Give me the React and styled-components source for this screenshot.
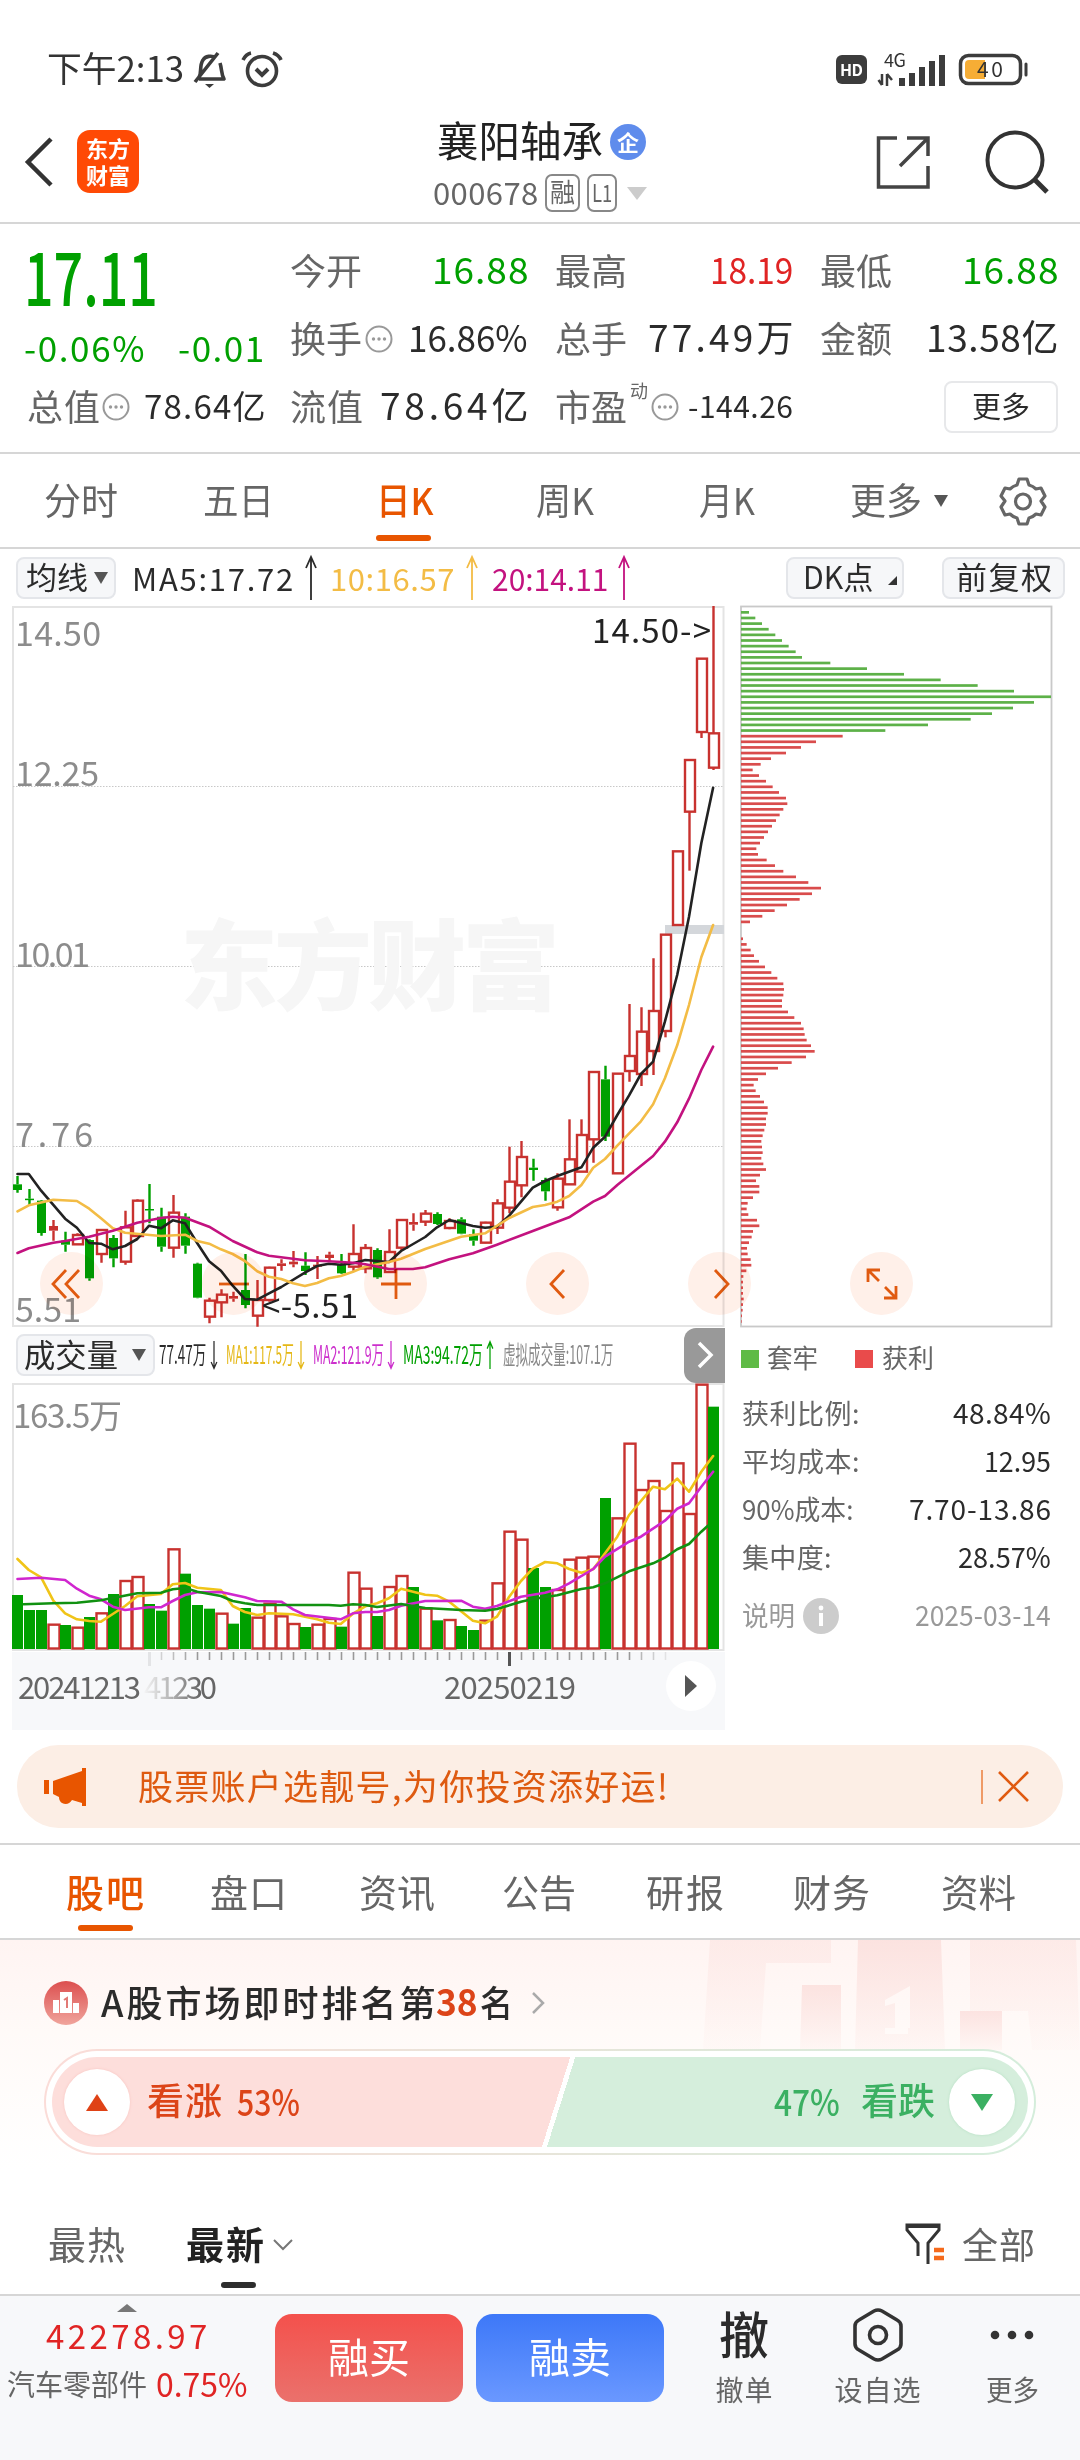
import React, { useLayoutEffect, useRef } from "react";
import styled, { createGlobalStyle } from "styled-components";

const FONT = '"Noto Sans CJK SC", "Noto Sans", sans-serif';
const C = {
  ink: "#2b2b2b", gray: "#666", mute: "#8c8c8c", line: "#d6d6d6", orange: "#e85500",
  green: "#00a000", red: "#e02424", candle: "#c8322f", amber: "#f3bc45", magenta: "#c3127f",
};

const Global = createGlobalStyle`
  * { box-sizing: border-box; }
  body { margin: 0; background: #fff; font-family: ${FONT}; -webkit-font-smoothing: antialiased; }
  svg { display: block; flex: none; overflow: visible; }
`;

/* ---------- fitted text ---------- */
const TextBox = styled.span`
  display: block;
  flex: none;
  width: ${p => p.$w}px;
  margin-left: ${p => p.$ml || 0}px;
  margin-top: ${p => p.$up || 0}px;
  font-size: ${p => p.$s}px;
  font-weight: ${p => p.$b || 400};
  color: ${p => p.$c || C.gray};
  line-height: 1;
  white-space: nowrap;
`;
const TextInner = styled.span`
  display: inline-block;
  transform-origin: 0 50%;
  margin-top: -0.06em;
  margin-bottom: 0.06em;
  vertical-align: top;
`;

function T({ w, s, c, b, ml, up, children }) {
  const ref = useRef(null);
  useLayoutEffect(() => {
    const el = ref.current;
    el.style.letterSpacing = "0px";
    el.style.transform = "none";
    const natural = el.offsetWidth;
    const count = el.textContent.length;
    if (natural > w) el.style.transform = `scaleX(${w / natural})`;
    else if (count > 1) el.style.letterSpacing = `${(w - natural) / (count - 1)}px`;
  }, [w, s, children]);
  return <TextBox $w={w} $s={s} $c={c} $b={b} $ml={ml} $up={up}><TextInner ref={ref}>{children}</TextInner></TextBox>;
}

/* ---------- layout parts ---------- */
const Screen = styled.div`
  width: 1080px; height: 2460px; display: flex; flex-direction: column; background: #fff; overflow: hidden;
`;
const Row = styled.div`
  display: flex; align-items: center; flex: none;
  height: ${p => p.$h}px;
  padding-left: ${p => p.$pl || 0}px;
  padding-top: ${p => p.$pt || 0}px;
`;
const Gap = styled.div`flex: none; width: ${p => p.$w}px;`;
const Header = styled.header`
  display: flex; height: 124px; flex: none; padding: 18px 0 0 24px; border-bottom: 2px solid ${C.line};
`;
const HeaderSide = styled.div`display: flex; align-items: center; height: 87px; width: ${p => p.$w}px;`;
const HeaderMid = styled.div`display: flex; flex-direction: column; width: 443px;`;
const Logo = styled.div`
  width: 62px; height: 63px; margin-left: 23px; background: #ff4a05; border-radius: 13px; color: #fff;
  display: grid; place-content: center; gap: 5px;
`;
const Badge = styled.div`
  width: 36px; height: 36px; margin-left: 7px; border-radius: 50%; background: #5f8cec; display: grid; place-content: center;
`;
const Tag = styled.div`
  width: ${p => p.$w}px; height: 38px; margin-left: 7px; border: 2px solid #888; border-radius: 7px; display: grid; place-content: center;
`;
const Quote = styled.section`
  height: 230px; flex: none; padding: 13px 0 0 24px; border-bottom: 2px solid ${C.line}; display: flex;
`;
const QuoteLeft = styled.div`width: 266px; display: flex; flex-direction: column;`;
const QuoteGrid = styled.div`display: grid; grid-template-columns: 265px 265px 238px; grid-template-rows: repeat(3, 68px);`;
const Cell = styled.div`
  display: flex; align-items: center; justify-content: space-between; width: 238px;
`;
const Pair = styled.div`display: flex; align-items: center; gap: 3px;`;
const MoreButton = styled.div`
  width: 114px; height: 52px; margin-left: auto; border: 2px solid #e7e8ea; border-radius: 8px; display: grid; place-content: center;
`;
const Tabs = styled.nav`
  height: ${p => p.$h}px; flex: none; display: flex; border-bottom: 2px solid ${C.line}; padding-left: ${p => p.$pl}px;
`;
const InfoTabs = styled(Tabs)`border-top: 2px solid ${C.line}; margin-top: 15px;`;
const Tab = styled.div`
  display: flex; flex-direction: column; align-items: center; flex: none;
  width: ${p => p.$w}px; margin-left: ${p => p.$ml || 0}px; padding-top: ${p => p.$pt}px;
`;
const Underline = styled.i`
  width: 55px; height: 6px; border-radius: 3px; background: ${C.orange}; margin-top: ${p => p.$mt}px; margin-left: ${p => p.$ml || 0}px; flex: none;
`;
const Chip = styled.div`
  display: flex; align-items: center; flex: none; width: ${p => p.$w}px; height: 42px; margin-left: ${p => p.$ml || 0}px;
  padding-left: ${p => p.$pl}px; background: #f6f7f9; border: 2px solid #e4e6ea; border-radius: 8px;
`;
const ChartArea = styled.section`display: flex; height: 1123px; flex: none; padding-left: 12px; position: relative;`;
const ChartCol = styled.div`width: 713px; display: flex; flex-direction: column;`;
const SideCol = styled.div`width: 330px; margin-left: 15px; display: flex; flex-direction: column;`;
const Controls = styled.div`position: absolute; left: 40px; top: 646px; display: flex; gap: 99px; mix-blend-mode: multiply;`;
const RoundButton = styled.div`
  width: 63px; height: 63px; border-radius: 50%; background: #fff0e9; display: grid; place-content: center;
`;
const NextTab = styled.div`
  width: 41px; height: 55px; margin-left: auto; background: #999; border-radius: 12px 0 0 12px; display: grid; place-content: center;
`;
const DateStrip = styled.div`height: 78px; margin-top: 1px; background: #f7f8fa; position: relative;`;
const PlayButton = styled.div`
  position: absolute; right: 9px; top: 9px; width: 50px; height: 50px; border-radius: 50%; background: #fff; display: grid; place-content: center;
`;
const Swatch = styled.i`width: 18px; height: 18px; background: ${p => p.$c}; margin-left: ${p => p.$ml || 0}px;`;
const StatRow = styled.div`
  display: flex; justify-content: space-between; align-items: center; height: ${p => p.$h || 48}px; width: 311px; padding-left: 2px;
`;
const Banner = styled.section`
  display: flex; align-items: center; height: 83px; flex: none; margin: 16px 17px 0; padding-left: 27px; border-radius: 42px; background: #fceee5;
`;
const BannerRule = styled.i`width: 2px; height: 34px; background: #ef9a66; margin-left: 313px;`;
const Rank = styled.section`
  height: 230px; flex: none; position: relative; padding-left: 44px;
  background: linear-gradient(#fff4f2, #fffaf8 40%, #fff);
`;
const Decor = styled.div`position: absolute; left: 700px; top: 0;`;
const Pill = styled.div`
  width: 992px; height: 106px; margin-top: 22px; position: relative; padding: 2px; border-radius: 53px;
  background: linear-gradient(90deg, #fbdcd8, #d4eddb);
`;
const PillWhite = styled.div`height: 102px; border-radius: 51px; background: #fff; padding: 6px;`;
const PillBody = styled.div`
  height: 90px; border-radius: 45px; overflow: hidden; display: flex; align-items: center; padding: 0 12px;
  background: linear-gradient(107.5deg, #fddedb 0 51.6%, #fff 51.6% 52.1%, #d5eedc 52.1%);
`;
const Knob = styled.div`
  width: 66px; height: 66px; border-radius: 50%; background: #fff; box-shadow: 0 0 3px ${p => p.$c}; display: grid; place-content: center; margin-left: ${p => p.$ml || 0}px;
`;
const ListHead = styled.section`height: 126px; flex: none; border-bottom: 2px solid ${C.line}; padding: 52px 0 0 48px;`;
const DarkLine = styled.i`display: block; width: 35px; height: 6px; border-radius: 3px; background: #2d2d2d; margin: 14px 0 0 173px;`;
const Dock = styled.footer`flex: 1; display: flex; background: #f7f8fa;`;
const DockIndex = styled.div`width: 275px; padding: 7px 0 0 7px; display: flex; flex-direction: column;`;
const Trade = styled.div`
  width: 188px; height: 88px; margin: 18px 13px 0 0; border-radius: 17px; display: grid; place-content: center;
  background: linear-gradient(${p => p.$from}, ${p => p.$to});
`;
const DockItem = styled.div`
  width: ${p => p.$w}px; margin-left: ${p => p.$ml}px; padding-top: 11px; display: flex; flex-direction: column; align-items: center;
`;
const DockIcon = styled.div`height: 56px; display: grid; place-content: center; margin-bottom: 14px;`;

/* ---------- small drawings ---------- */
const Dots = () => (
  <svg width="28" height="28" viewBox="0 0 28 28"><circle cx="14" cy="14" r="12.5" fill="none" stroke="#999" strokeWidth="2" />
    {[8.5, 14, 19.5].map(x => <circle key={x} cx={x} cy="14" r="1.7" fill="#999" />)}</svg>
);
const Tri = ({ w, h, c, up }) => (
  <svg width={w} height={h} viewBox="0 0 10 10" preserveAspectRatio="none"><path d={up ? "M5 0L10 10H0Z" : "M0 0H10L5 10Z"} fill={c} /></svg>
);
const Arrow = ({ c, down, small }) => (
  <svg width={small ? 8 : 14} height={small ? 28 : 44} viewBox="0 0 14 44" fill="none" stroke={c} strokeWidth={small ? 2.2 : 1.8} preserveAspectRatio="none">
    <path d={down ? "M7 0V42M2 33L7 43L12 33" : "M7 44V2M2 12L7 1L12 12"} />
  </svg>
);
const StatusIcons = () => (
  <svg width="92" height="40" viewBox="0 0 92 40" fill="none" stroke="#3c3c3c" strokeWidth="3.6">
    <path d="M9 28C12 24 9 17 13 11C15 7 22 6 26 9M30 14C32 20 31 25 34 30H9M5 33L28 4" strokeLinejoin="round" />
    <path d="M15 35H24L19.500 39Z" fill="#3c3c3c" stroke="none" />
    <circle cx="72" cy="22" r="14.500" /><path d="M66 20L72 26L78 20" strokeWidth="4" /><path d="M53 11Q56 5 61 4M83 4Q89 6 91 11" />
  </svg>
);
const Signal = () => (
  <svg width="68" height="38" viewBox="880 48 68 38">
    <text x="886" y="65" fontSize="18" fill="#333" textLength="22" fontFamily={FONT}>4G</text>
    <path d="M884 72V83M884 83L880.500 78M889 84V72M889 72L894 78" stroke="#3c3c3c" strokeWidth="2.500" fill="none" />
    {[[901, 76], [911, 71], [921, 65], [931, 59], [941, 53]].map(([x, y]) => <path key={x} d={`M${x} ${y}h6V84h-6z`} fill="#3c3c3c" />)}
  </svg>
);
const Battery = () => (
  <svg width="70" height="34" viewBox="960 51 70 34">
    <rect x="962.500" y="54.500" width="60" height="28" rx="8" fill="#fff" stroke="#3c3c3c" strokeWidth="3.500" />
    <path d="M971 59H987V78H971Q967 78 967 74V63Q967 59 971 59Z" fill="#f6ad35" />
    <path d="M1028 63V74" stroke="#3c3c3c" strokeWidth="3" strokeLinecap="round" />
    <text x="979" y="76" fontSize="21" fill="#333" textLength="26" fontFamily={FONT}>40</text>
  </svg>
);
const Gear = () => (
  <svg width="48" height="50" viewBox="0 0 48 50" fill="none" stroke="#666" strokeWidth="3.200" strokeLinejoin="round">
    <path d="M20 3H28L30 9Q34 10 37 13L42 12L46 20L42 25L46 31L42 39L37 38Q34 41 30 42L28 48H20L18 42Q14 41 11 38L6 39L2 31L6 25L2 20L6 12L11 13Q14 10 18 9Z" />
    <circle cx="24" cy="25.500" r="7.500" />
  </svg>
);
const ControlIcon = ({ d }) => (
  <svg width="44" height="34" viewBox="-22 -17 44 34" fill="none" stroke="#e05a10" strokeWidth="2.800"><path d={d} /></svg>
);

/* ---------- chart data ---------- */
const X0 = 17.5, STEP = 12;
// [rising, high, bodyTop, bodyBottom, low, solid] in third-pixels below y = 950
const CANDLES = [
  [0,678,703,720,728],[0,717,746,750,765],[0,750,752,849,857],[1,810,828,842,872,1],[0,845,872,884,905],[1,850,855,883,885],
  [0,868,870,985,992],[1,838,840,912,938],[0,855,864,925,952],[1,782,832,935,944],[1,748,752,858,858],[0,702,777,781,820],
  [0,773,800,890,905],[1,735,788,893,923],[0,790,800,887,911],[0,938,941,1043,1045],[1,1043,1052,1100,1120],[1,1018,1034,1057,1102],
  [1,1025,1038,1046,1055,1],[0,912,1020,1065,1075],[1,990,1050,1097,1130],[1,950,953,1050,1055],[1,928,940,948,962,1],[1,903,935,943,952,1],
  [0,907,947,963,975],[1,918,944,950,987,1],[1,905,914,924,935,1],[0,912,942,970,972],[1,823,912,950,962],[1,882,894,955,970],
  [0,895,900,982,986],[1,838,906,966,968],[1,808,810,893,900],[1,790,816,824,842,1],[1,780,791,815,828],[0,787,792,822,825],
  [1,805,813,834,838],[0,802,808,851,853],[0,838,852,872,887],[1,815,818,878,880],[1,748,760,833,852],[1,590,695,773,790],
  [1,573,621,706,742],[0,626,653,660,692],[0,683,690,724,752],[1,670,686,772,782],[1,508,628,703,703],[1,508,555,665,665],
  [1,363,366,568,638],[0,347,388,560,573],[1,370,371,670,670],[1,162,318,363,395],[1,172,245,372,408],[1,25,183,303,375],
  [1,-46,-46,243,262],[1,-296,-296,-75,-75],[1,-570,-570,-415,-238],[1,-874,-874,-654,-636],[1,-1032,-650,-547,-540],
];
const MA5 = "37,672 61,672 87,722 138,806 163,833 189,879 214,881 239,898 265,888 291,867 316,827 341,835 366,811 392,820 418,880 443,934 468,962 493,1007 519,1047 545,1049 570,1030 596,1011 646,968 672,948 697,941 722,944 748,940 774,930 824,936 850,903 901,861 926,832 952,810 1002,828 1028,833 1053,830 1079,797 1129,713 1155,693 1181,678 1232,652 1257,593 1282,560 1308,495 1333,436 1358,372 1384,335 1409,215 1435,75 1460,-100 1486,-320 1511,-487";
const MA10 = "37,784 61,766 113,749 163,753 189,776 214,805 239,835 265,848 341,858 392,854 418,873 443,881 468,898 493,912 519,933 545,964 570,980 596,987 621,1000 646,1008 672,999 697,985 722,978 748,965 774,950 824,936 850,926 901,897 977,860 1028,850 1079,804 1129,771 1155,765 1181,755 1206,738 1232,705 1257,653 1282,627 1308,587 1358,514 1384,463 1409,385 1435,286 1460,165 1486,22 1511,-75";
const MA20 = "37,909 61,895 113,878 138,873 189,860 239,842 291,818 341,804 366,800 392,803 443,830 493,873 545,907 570,917 646,931 697,934 748,938 774,943 824,957 875,957 901,952 952,928 1002,910 1053,884 1129,843 1206,802 1257,755 1282,738 1308,705 1384,618 1409,575 1435,517 1460,446 1486,360 1511,290";
const V5 = "37,717 61,750 87,772 113,842 138,880 163,898 189,903 214,905 239,882 265,858 291,829 341,822 366,793 392,789 418,803 468,810 493,858 519,876 545,885 570,880 621,883 672,898 697,908 722,912 748,881 774,859 799,850 824,835 850,806 901,824 926,827 952,845 977,874 1002,902 1028,910 1053,890 1079,830 1104,783 1129,746 1155,726 1181,730 1206,747 1232,758 1257,748 1308,650 1333,585 1384,500 1409,508 1435,476 1460,515 1486,455 1511,408";
const V10 = "37,777 87,773 138,780 163,806 189,827 214,838 239,860 265,870 316,862 341,862 366,843 392,825 418,817 468,816 519,832 545,843 596,845 621,868 646,885 722,898 748,880 774,876 799,876 824,870 850,857 901,843 977,842 1002,860 1028,866 1053,858 1104,830 1155,818 1181,808 1206,790 1257,747 1282,710 1333,665 1358,650 1409,602 1435,566 1460,550 1486,500 1511,455";
const V20 = "50,853 113,850 163,848 214,841 239,834 291,820 341,818 366,808 392,804 418,815 468,828 493,843 519,850 545,855 697,855 722,857 748,853 774,855 799,861 850,852 875,858 901,864 977,870 1028,872 1053,867 1104,845 1129,837 1181,826 1232,807 1257,802 1282,790 1333,754 1384,730 1409,713 1435,688 1460,672 1486,635 1500,617";
const VOL = [825,870,870,914,915,923,891,880,822,783,771,852,872,688,761,855,866,881,911,864,893,851,889,912,921,914,897,920,758,806,888,801,768,801,866,901,900,918,930,902,790,635,659,744,801,810,719,713,710,534,595,371,510,483,573,430,582,194,260];
const VOL_DOWN = [0,1,2,4,6,8,11,12,14,15,16,18,19,24,27,30,33,35,37,38,43,44,49,58];
const CHIPS = [87,106,126,146,166,186,206,227,246,331,441,552,662,773,882,993,942,879,816,752,624,496,368,288,243,198,153,122,98,117,138,158,177,198,202,190,179,168,156,144,132,120,109,114,140,165,190,228,265,303,276,239,201,164,127,90,0,0,69,80,92,102,117,135,154,172,190,192,190,186,186,204,223,243,251,254,260,273,284,258,215,174,138,114,101,107,120,132,143,143,138,138,133,128,124,126,128,124,130,138,120,108,118,118,99,83,80,85,111,118,99,95,87,81,83,92,94,79,70,69,69,69,71,69,68,66,65];

const toPoints = (str, base) => str.split(" ").map(p => {
  const [x, y] = p.split(",").map(Number);
  return `${(x / 2.119).toFixed(1)},${(base + y / 3).toFixed(1)}`;
}).join(" ");
const Line = ({ data, base, c, w = 3 }) => (
  <polyline points={toPoints(data, base)} fill="none" stroke={c} strokeWidth={w} strokeLinejoin="round" strokeLinecap="round" />
);
const AxisText = ({ x, y, w, s = 34, c = C.mute, b = 400, children }) => (
  <text x={x} y={y} textLength={w} fontSize={s} fill={c} fontWeight={b} fontFamily={FONT}>{children}</text>
);

function PriceChart() {
  return (
    <svg width="713" height="721" viewBox="12 606 713 721">
      <rect x="13" y="607" width="710.500" height="719" fill="none" stroke="#e4e4e4" strokeWidth="2" />
      {[786.5, 966.5, 1146.5].map(y => <path key={y} d={`M13 ${y}H723`} stroke="#c8c8c8" strokeDasharray="1.5 1.5" />)}
      <AxisText x={180} y={1002} w={380} s={98} c="#f6f6f6" b={900}>东方财富</AxisText>
      <rect x="665" y="925" width="59" height="9" fill="#d4d7db" />
      <AxisText x={15} y={646} w={86}>14.50</AxisText>
      <AxisText x={15} y={786} w={84}>12.25</AxisText>
      <AxisText x={15} y={967} w={75}>10.01</AxisText>
      <AxisText x={15} y={1147} w={78}>7.76</AxisText>
      <AxisText x={15} y={1322} w={66}>5.51</AxisText>
      {CANDLES.map(([up, hi, t, b, lo, solid], i) => {
        const x = X0 + i * STEP, y = v => 950 + v / 3;
        const c = up ? C.candle : C.green, filled = !up || solid;
        return (
          <g key={i} stroke={c} strokeWidth="2.4">
            <path d={`M${x} ${y(hi)}V${y(t)}M${x} ${y(b)}V${y(lo)}`} />
            {filled
              ? <rect x={x - 4.5} y={y(t)} width="9" height={Math.max(1.5, y(b) - y(t))} fill={c} stroke="none" />
              : <rect x={x - 4.5} y={y(t)} width="10" height={y(b) - y(t)} fill="#fff" />}
          </g>
        );
      })}
      <Line data={MA5} base={950} c="#222" w={2.6} />
      <Line data={MA10} base={950} c={C.amber} w={2.6} />
      <Line data={MA20} base={950} c={C.magenta} w={2.6} />
      <AxisText x={592} y={643} w={119} s={33} c="#222">14.50-&gt;</AxisText>
      <AxisText x={262} y={1318} w={96} s={33} c="#222">&lt;-5.51</AxisText>
    </svg>
  );
}

function VolumeChart() {
  return (
    <svg width="713" height="268" viewBox="12 1383 713 268">
      <rect x="13" y="1384" width="710.500" height="266" fill="none" stroke="#e4e4e4" strokeWidth="2" />
      <AxisText x={13} y={1428} w={109} s={33}>163.5万</AxisText>
      {VOL.map((v, i) => {
        const x = X0 + i * STEP, y = 1320 + v / 3, down = VOL_DOWN.includes(i);
        return down
          ? <rect key={i} x={x - 5.5} y={y} width="11" height={1649 - y} fill={C.green} />
          : <rect key={i} x={x - 5} y={y} width="11" height={1648.5 - y} fill="#fff" stroke={C.candle} strokeWidth="2.4" />;
      })}
      <Line data={V5} base={1320} c="#f0c418" w={2.6} />
      <Line data={V10} base={1320} c="#d026cf" w={2.6} />
      <Line data={V20} base={1320} c="#119111" w={2.6} />
    </svg>
  );
}

function DateAxis() {
  const ticks = Array.from({ length: 44 }, (_, i) => i + 11);
  return (
    <svg width="713" height="78" viewBox="12 1652 713 78">
      <defs><linearGradient id="fade" x1="145" x2="200" gradientUnits="userSpaceOnUse"><stop offset="0" stopColor="#f2f2f3" /><stop offset=".3" stopColor="#ccc" /><stop offset="1" stopColor="#666" /></linearGradient></defs>
      {ticks.map(i => {
        const big = i === 41 || i === 11;
        const o = i < 15 ? (i - 10) * 0.2 : i > 51 ? (55 - i) * 0.22 : 1;
        return <path key={i} d={`M${X0 + i * STEP} 1652V${big ? 1666 : 1660}`} stroke={i === 41 ? "#555" : "#999"} opacity={o} strokeWidth={big ? 3 : 1.6} />;
      })}
      <AxisText x={18} y={1699} w={123} s={31} c="#666">20241213</AxisText>
      <AxisText x={144} y={1699} w={73} s={31} c="url(#fade)">41230</AxisText>
      <AxisText x={444} y={1699} w={132} s={31} c="#666">20250219</AxisText>
    </svg>
  );
}

function CostChart() {
  return (
    <svg width="314" height="721" viewBox="740 606 314 721">
      <rect x="741" y="606.5" width="310.500" height="720" fill="none" stroke="#c9c9c9" strokeWidth="1.800" />
      {CHIPS.map((end, i) => end > 0 && (
        <rect key={i} x="741" y={611 + i * 5.628} width={(end - 63) / 3} height="2.700" fill={i < 22 ? "#5db148" : "#d94c4c"} />
      ))}
    </svg>
  );
}

const CONTROLS = ["M-6 -14L-19 0L-6 14M7 -14L-6 0L7 14", "M-15 0H15", "M-15 0H15M0 -15V15", "M6 -14L-7 0L6 14", "M-5 -14L8 0L-5 14", "M-14 -2V-14H-2M-14 -14L-3 -3M2 14H14V2M3 3L14 14"];
const STATS = [["获利比例:", 118, "48.84%", 98], ["平均成本:", 118, "12.95", 67], ["90%成本:", 111, "7.70-13.86", 142], ["集中度:", 90, "28.57%", 93]];
const INFO_TABS = [["股吧", 66, 78], ["盘口", 210, 77], ["资讯", 359, 76], ["公告", 502, 74], ["研报", 646, 78], ["财务", 793, 77], ["资料", 941, 75]];

export default function App() {
  return (
    <Screen>
      <Global />
      <Row $h={100} $pl={47} $pt={38}>
        <T w={137} s={35} c="#333">下午2:13</T>
        <Gap $w={6} /><StatusIcons />
        <Gap $w={554} />
        <svg width="31" height="29" viewBox="0 0 31 29"><rect width="31" height="29" rx="6" fill="#3c3c3c" /><text x="4" y="20.500" fontSize="16" fontWeight="700" fill="#fff" textLength="23" fontFamily={FONT}>HD</text></svg>
        <Gap $w={11} /><Signal /><Gap $w={12} /><Battery />
      </Row>

      <Header>
        <HeaderSide $w={409}>
          <svg width="30" height="50" viewBox="0 0 30 50" fill="none" stroke="#333" strokeWidth="4.500"><path d="M27 2L4 25L27 48" /></svg>
          <Logo><T w={44} s={22} c="#fff" b={700}>东方</T><T w={44} s={22} c="#fff" b={700}>财富</T></Logo>
        </HeaderSide>
        <HeaderMid>
          <Row $h={48} $pl={4}><T w={166} s={42} c="#222" b={400}>襄阳轴承</T><Badge><T w={22} s={22} c="#fff" b={700}>企</T></Badge></Row>
          <Row $h={54}><T w={105} s={31} c="#666">000678</T>
            <Tag $w={35}><T w={25} s={26}>融</T></Tag><Tag $w={30}><T w={20} s={24}>L1</T></Tag><Gap $w={10} /><Tri w={20} h={13} c="#ccc" />
          </Row>
        </HeaderMid>
        <HeaderSide $w={200}>
          <svg width="56" height="56" viewBox="0 0 56 56" fill="none" stroke="#444" strokeWidth="3.500"><path d="M21 4H2.500V53H52V32M31 4H52V22M52 4L24 32" /></svg>
          <Gap $w={53} />
          <svg width="66" height="66" viewBox="0 0 66 66" fill="none" stroke="#333" strokeWidth="4"><circle cx="30" cy="31" r="27.500" /><path d="M49 50L62 63" strokeWidth="5" /></svg>
        </HeaderSide>
      </Header>

      <Quote>
        <QuoteLeft>
          <Row $h={82}><T w={134} s={74} c={C.green} b={500}>17.11</T></Row>
          <Row $h={60}><T w={120} s={35} c={C.green} b={400}>-0.06%</T><T w={86} ml={34} s={35} c={C.green} b={400}>-0.01</T></Row>
          <Row $h={56} $pl={3}><T w={73} s={36}>总值</T><Gap $w={2} /><Dots /><T w={121} ml={14} s={33} c={C.ink}>78.64亿</T></Row>
        </QuoteLeft>
        <QuoteGrid>
          <Cell><T w={72} s={36}>今开</T><T w={96} s={37} c={C.green}>16.88</T></Cell>
          <Cell><T w={72} s={36}>最高</T><T w={83} s={37} c={C.red}>18.19</T></Cell>
          <Cell><T w={72} s={36}>最低</T><T w={96} s={37} c={C.green}>16.88</T></Cell>
          <Cell><Pair><T w={72} s={36}>换手</T><Dots /></Pair><T w={120} s={37} c={C.ink}>16.86%</T></Cell>
          <Cell><T w={72} s={36}>总手</T><T w={145} s={37} c={C.ink}>77.49万</T></Cell>
          <Cell><T w={72} s={36}>金额</T><T w={132} s={37} c={C.ink}>13.58亿</T></Cell>
          <Cell><T w={73} s={36}>流值</T><T w={148} s={37} c={C.ink}>78.64亿</T></Cell>
          <Cell><Pair><T w={72} s={36}>市盈</T><T w={18} s={18} up={-32}>动</T><Dots /></Pair><T w={105} s={30} c={C.ink}>-144.26</T></Cell>
          <Cell><MoreButton><T w={58} s={29} c={C.ink}>更多</T></MoreButton></Cell>
        </QuoteGrid>
      </Quote>

      <Tabs $h={95} $pl={44}>
        <Tab $w={74} $pt={29}><T w={74} s={37}>分时</T></Tab>
        <Tab $w={71} $ml={85} $pt={29}><T w={71} s={37}>五日</T></Tab>
        <Tab $w={58} $ml={102} $pt={29}><T w={58} s={37} c={C.orange} b={500}>日K</T><Underline $mt={15} $ml={-4} /></Tab>
        <Tab $w={58} $ml={102} $pt={29}><T w={58} s={37}>周K</T></Tab>
        <Tab $w={56} $ml={105} $pt={29}><T w={56} s={37}>月K</T></Tab>
        <Tab $w={72} $ml={95} $pt={29}><T w={72} s={37}>更多</T></Tab>
        <Tab $w={14} $ml={12} $pt={41}><Tri w={14} h={12} c="#555" /></Tab>
        <Tab $w={48} $ml={51} $pt={22}><Gear /></Tab>
      </Tabs>

      <Row $h={57} $pl={16}>
        <Chip $w={100} $pl={8}><T w={62} s={31} c={C.ink}>均线</T><Gap $w={6} /><Tri w={14} h={12} c="#555" /></Chip>
        <T w={161} ml={16} s={31} c={C.ink} up={3}>MA5:17.72</T><Gap $w={11} /><Arrow c={C.ink} />
        <T w={124} ml={12} s={31} c={C.amber} up={3}>10:16.57</T><Gap $w={11} /><Arrow c={C.amber} />
        <T w={116} ml={13} s={31} c={C.magenta} up={3}>20:14.11</T><Gap $w={9} /><Arrow c={C.magenta} />
        <Chip $w={118} $ml={155} $pl={15}><T w={70} s={31} c={C.ink}>DK点</T><Gap $w={13} /><svg width="12" height="12"><path d="M11 4V13H2Z" fill="#333" /></svg></Chip>
        <Chip $w={123} $ml={38} $pl={12}><T w={96} s={31} c={C.ink}>前复权</T></Chip>
      </Row>

      <ChartArea>
        <ChartCol>
          <PriceChart />
          <Row $h={56} $pl={4}>
            <Chip $w={139} $pl={6}><T w={94} s={32} c={C.ink}>成交量</T><Gap $w={14} /><Tri w={14} h={12} c="#555" /></Chip>
            <T w={47} ml={4} s={25} c={C.ink}>77.47万</T><Gap $w={4} /><Arrow c={C.ink} down small />
            <T w={68} ml={8} s={25} c="#e5b817">MA1:117.5万</T><Gap $w={3} /><Arrow c="#e5b817" down small />
            <T w={71} ml={8} s={25} c="#cc2fcc">MA2:121.9万</T><Gap $w={3} /><Arrow c="#cc2fcc" down small />
            <T w={80} ml={8} s={25} c={C.green}>MA3:94.72万</T><Gap $w={3} /><Arrow c={C.green} small />
            <T w={110} ml={9} s={25} c="#888">虚拟成交量:107.1万</T>
            <NextTab><svg width="18" height="28" viewBox="0 0 18 28" fill="none" stroke="#fff" strokeWidth="3.500"><path d="M3 2L15 14L3 26" /></svg></NextTab>
          </Row>
          <VolumeChart />
          <DateStrip><DateAxis /><PlayButton><svg width="14" height="22" viewBox="0 0 14 22"><path d="M1 0L13 11L1 22Z" fill="#555" /></svg></PlayButton></DateStrip>
        </ChartCol>
        <SideCol>
          <CostChart />
          <Row $h={63} $pl={1}><Swatch $c="#5fbb46" /><T w={51} ml={8} s={26}>套牢</T><Swatch $c="#e94b4b" $ml={37} /><T w={52} ml={9} s={26}>获利</T></Row>
          {STATS.map(([k, kw, v, vw]) => <StatRow key={k}><T w={kw} s={27}>{k}</T><T w={vw} s={28} c={C.ink}>{v}</T></StatRow>)}
          <StatRow $h={68}><Pair><T w={53} s={27} c="#999">说明</T><Gap $w={2} />
            <svg width="36" height="36"><circle cx="18" cy="18" r="18" fill="#ccc" /><circle cx="18" cy="10" r="2.400" fill="#fff" /><path d="M18 15V28" stroke="#fff" strokeWidth="4" /></svg></Pair>
            <T w={136} s={28} c="#999">2025-03-14</T></StatRow>
        </SideCol>
        <Controls>{CONTROLS.map(d => <RoundButton key={d}><ControlIcon d={d} /></RoundButton>)}</Controls>
      </ChartArea>

      <Banner>
        <svg width="44" height="38" viewBox="0 0 44 38" fill={C.orange}><path d="M0 12H5V26H0ZM9 13L38 3V0H42V38H38V35L28 32Q24 38 18 35Q15 33 15 29L9 26Z" /></svg>
        <T w={530} ml={50} s={35} c="#de5a10">股票账户选靓号,为你投资添好运!</T>
        <BannerRule /><Gap $w={14} />
        <svg width="33" height="31" viewBox="0 0 33 31" stroke="#e05a10" strokeWidth="2.600"><path d="M2 1L31 30M31 1L2 30" /></svg>
      </Banner>

      <InfoTabs $h={97} $pl={66}>
        {INFO_TABS.map(([name, x, w], i) => (
          <Tab key={name} $w={w} $ml={i ? x - INFO_TABS[i - 1][1] - INFO_TABS[i - 1][2] : 0} $pt={29}>
            <T w={w} s={38} c={i ? C.gray : C.orange} b={i ? 400 : 500}>{name}</T>
            {i === 0 && <Underline $mt={13} />}
          </Tab>
        ))}
      </InfoTabs>

      <Rank>
        <Decor>
          <svg width="380" height="110" viewBox="700 1940 380 110">
            <defs><linearGradient id="pod" x2="0" y2="1"><stop offset="0" stopColor="#fbdedb" stopOpacity=".8" /><stop offset="1" stopColor="#fbdedb" stopOpacity=".15" /></linearGradient></defs>
            <g fill="url(#pod)"><path opacity=".55" d="M710 1940H831V1963H766L760 2050H703Z" /><path d="M802 1985H841V2050H800Z" />
              <path fillRule="evenodd" d="M858 1940H941L945 2050H855ZM885 2000L910 1986V2028H908V2034H885V2028H895V2003L885 2006Z" />
              <path opacity=".55" d="M970 1940H1076L1080 2050H1032L1028 2011H970Z" /><path d="M960 2011H1002V2050H960Z" /></g>
          </svg>
        </Decor>
        <Row $h={87} $pt={39}>
          <svg width="44" height="44" viewBox="0 0 44 44"><defs><linearGradient id="med" x2="0" y2="1"><stop stopColor="#dc4f4f" /><stop offset="1" stopColor="#f0a49c" /></linearGradient></defs><circle cx="22" cy="22" r="22" fill="url(#med)" /><path d="M9 19H15V32H9ZM16 11H28V32H16ZM29 22H35V32H29Z" fill="#fff" /><path d="M20 19L23 17V27" fill="none" stroke="#e27a76" strokeWidth="2" /></svg>
          <T w={334} ml={13} s={36} c={C.ink} b={500}>A股市场即时排名第</T><T w={42} ml={1} s={37} c="#dc4418" b={700}>38</T><T w={33} ml={2} s={36} c={C.ink} b={500}>名</T>
          <Gap $w={18} /><svg width="14" height="22" viewBox="0 0 14 22" fill="none" stroke="#aaa" strokeWidth="2.500"><path d="M2 1L12 11L2 21" /></svg>
        </Row>
        <Pill><PillWhite><PillBody>
          <Knob $c="#f8c5c0"><Tri w={22} h={17} c="#df4216" up /></Knob>
          <T w={75} ml={17} s={37} c="#dc4418" b={500}>看涨</T><T w={63} ml={15} s={36} c="#dc4418" b={500}>53%</T>
          <T w={66} ml={474} s={36} c="#3bb062" b={500}>47%</T><T w={74} ml={21} s={37} c="#3bb062" b={500}>看跌</T>
          <Knob $c="#b5dfc2" $ml={14}><Tri w={22} h={17} c="#3bb062" /></Knob>
        </PillBody></PillWhite></Pill>
      </Rank>

      <ListHead>
        <Row $h={46}>
          <T w={77} s={38}>最热</T><T w={78} ml={61} s={38} c="#222" b={700}>最新</T><Gap $w={9} />
          <svg width="20" height="14" viewBox="0 0 20 14" fill="none" stroke="#777" strokeWidth="2"><path d="M1 2L10 11L19 2" /></svg>
          <Gap $w={612} />
          <svg width="40" height="44" viewBox="0 0 40 44" fill="none" stroke="#333" strokeWidth="3"><path d="M13 33V20L2 7V2H34V7L23 20V41" /><path d="M2 3H34" strokeWidth="4" /><path d="M29 27H39M29 35H39" stroke="#f56a1c" strokeWidth="4.500" /></svg>
          <T w={73} ml={17} s={36}>全部</T>
        </Row>
        <DarkLine />
      </ListHead>

      <Dock>
        <DockIndex>
          <Row $h={9} $pl={110}><Tri w={20} h={8} c="#777" up /></Row>
          <Row $h={50} $pl={39}><T w={161} s={33} c={C.red}>42278.97</T></Row>
          <Row $h={46}><T w={140} s={29}>汽车零部件</T><T w={92} ml={9} s={33} c={C.red} b={400}>0.75%</T></Row>
        </DockIndex>
        <Trade $from="#f4514c" $to="#ea716c"><T w={82} s={41} c="#fff" b={400}>融买</T></Trade>
        <Trade $from="#3d78f8" $to="#6a98ff"><T w={82} s={41} c="#fff" b={400}>融卖</T></Trade>
        <DockItem $w={58} $ml={38}><DockIcon><T w={50} s={50} c={C.ink} b={500}>撤</T></DockIcon><T w={57} s={28}>撤单</T></DockItem>
        <DockItem $w={87} $ml={61}><DockIcon>
          <svg width="50" height="54" viewBox="0 0 50 54" fill="none" stroke="#333" strokeWidth="3.600"><path d="M25 2Q27 2 29 3L44 12Q48 14 48 18V36Q48 40 44 42L29 51Q25 53 21 51L6 42Q2 40 2 36V18Q2 14 6 12L21 3Q23 2 25 2Z" /><circle cx="25" cy="27" r="8.500" /></svg>
        </DockIcon><T w={86} s={28}>设自选</T></DockItem>
        <DockItem $w={54} $ml={64}><DockIcon><svg width="44" height="10" fill="#333"><circle cx="5" cy="5" r="4.300" /><circle cx="22" cy="5" r="4.300" /><circle cx="39" cy="5" r="4.300" /></svg></DockIcon><T w={53} s={28}>更多</T></DockItem>
      </Dock>
    </Screen>
  );
}
